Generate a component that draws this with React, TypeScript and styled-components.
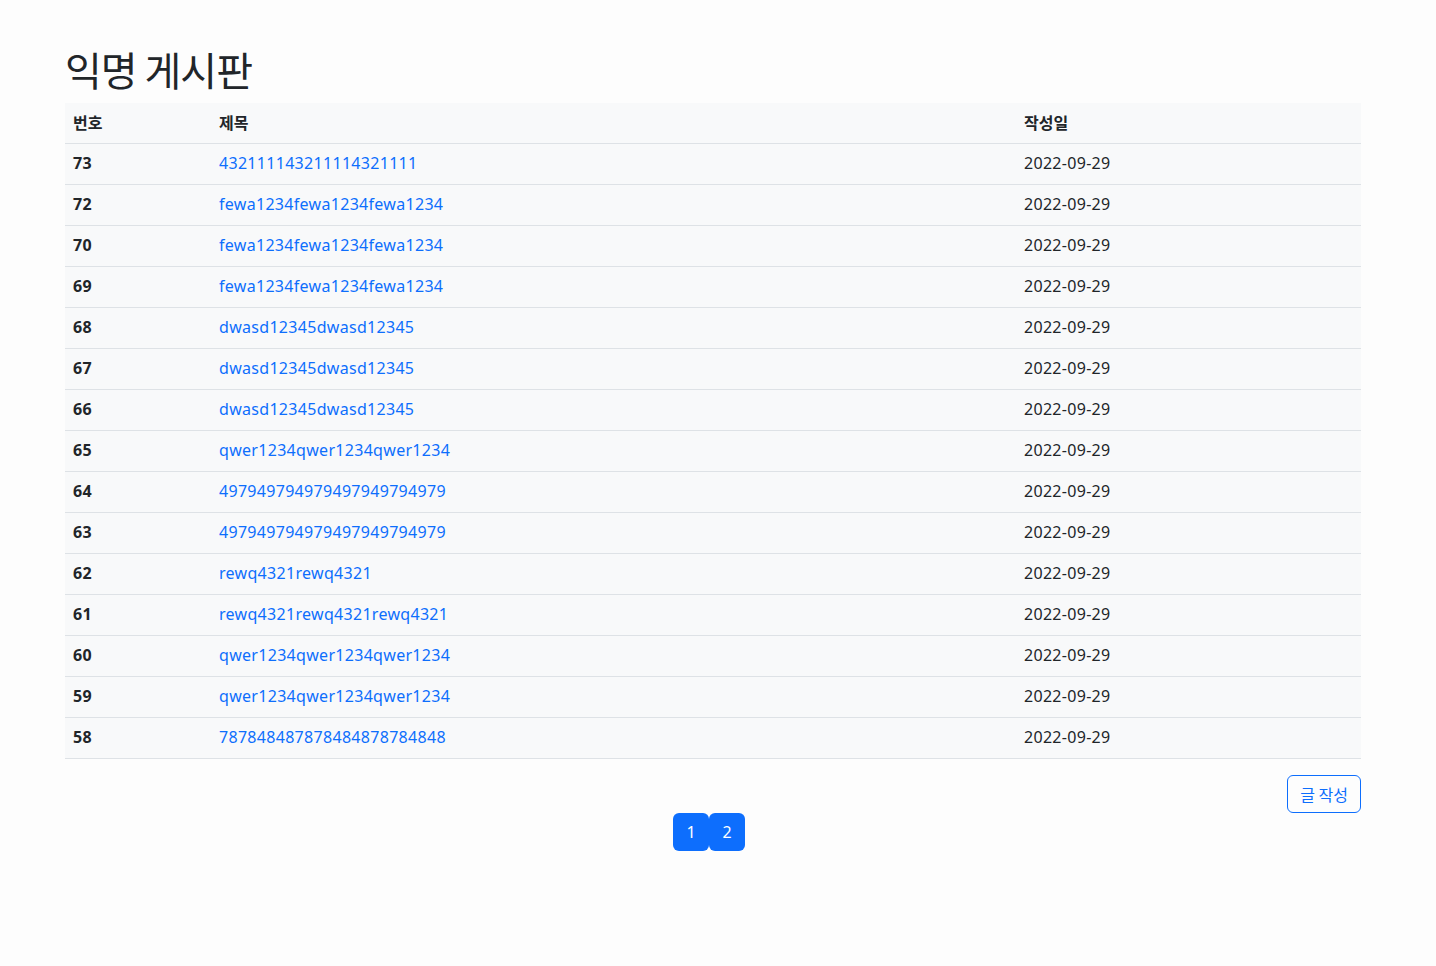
import styled, { createGlobalStyle } from 'styled-components'

const GlobalStyle = createGlobalStyle`
  body {
    margin: 0;
    padding-right: 10px;
    background: #fdfdfd;
    color: #212529;
    font-family: "Noto Sans", "Noto Sans CJK KR", sans-serif;
    font-size: 16px;
    line-height: 1.5;
  }
`

const Container = styled.div`
  width: 1296px;
  margin: 0 auto;
  padding-top: 47px;
`

const Title = styled.h1`
  margin: -2px 0 10px;
  font-size: 40px;
  font-weight: 400;
  line-height: 1.2;
  letter-spacing: -1px;
  font-family: "Noto Sans CJK KR", sans-serif;
`

const Table = styled.table`
  width: 100%;
  table-layout: fixed;
  border-collapse: collapse;
  background: #f8f9fa;
`

const HeadCell = styled.th<{ $width?: number }>`
  width: ${(p) => (p.$width ? `${p.$width}px` : 'auto')};
  padding: 7px 8px 9px;
  text-align: left;
  font-weight: 700;
  font-family: "Noto Sans CJK KR", sans-serif;
  border-bottom: 1px solid #dee2e6;
`

const Cell = styled.td<{ $bold?: boolean }>`
  padding: 7px 8px 9px;
  font-weight: ${(p) => (p.$bold ? 700 : 400)};
  letter-spacing: 0.3px;
  border-bottom: 1px solid #dee2e6;
`

const TitleLink = styled.a`
  color: #0d6efd;
  text-decoration: none;
`

const Actions = styled.div`
  display: flex;
  justify-content: flex-end;
  margin-top: 16px;
`

const OutlineButton = styled.button`
  height: 38px;
  padding: 0 12px;
  border: 1px solid #0d6efd;
  border-radius: 6px;
  background: transparent;
  color: #0d6efd;
  font-size: 16px;
  font-family: "Noto Sans CJK KR", sans-serif;
`

const Pager = styled.div`
  display: flex;
  justify-content: center;
  padding-right: 8px;
`

const PageButton = styled.button`
  width: 36px;
  height: 38px;
  border: none;
  border-radius: 6px;
  background: #0d6efd;
  color: #fff;
  font-size: 16px;
  font-family: inherit;
`

type Post = { id: number; title: string; date: string }

const posts: Post[] = [
  { id: 73, title: '432111143211114321111', date: '2022-09-29' },
  { id: 72, title: 'fewa1234fewa1234fewa1234', date: '2022-09-29' },
  { id: 70, title: 'fewa1234fewa1234fewa1234', date: '2022-09-29' },
  { id: 69, title: 'fewa1234fewa1234fewa1234', date: '2022-09-29' },
  { id: 68, title: 'dwasd12345dwasd12345', date: '2022-09-29' },
  { id: 67, title: 'dwasd12345dwasd12345', date: '2022-09-29' },
  { id: 66, title: 'dwasd12345dwasd12345', date: '2022-09-29' },
  { id: 65, title: 'qwer1234qwer1234qwer1234', date: '2022-09-29' },
  { id: 64, title: '497949794979497949794979', date: '2022-09-29' },
  { id: 63, title: '497949794979497949794979', date: '2022-09-29' },
  { id: 62, title: 'rewq4321rewq4321', date: '2022-09-29' },
  { id: 61, title: 'rewq4321rewq4321rewq4321', date: '2022-09-29' },
  { id: 60, title: 'qwer1234qwer1234qwer1234', date: '2022-09-29' },
  { id: 59, title: 'qwer1234qwer1234qwer1234', date: '2022-09-29' },
  { id: 58, title: '787848487878484878784848', date: '2022-09-29' },
]

const App = () => {
  return (
    <>
      <GlobalStyle />
      <Container>
        <Title>익명 게시판</Title>
        <Table>
          <thead>
            <tr>
              <HeadCell $width={130}>번호</HeadCell>
              <HeadCell $width={789}>제목</HeadCell>
              <HeadCell>작성일</HeadCell>
            </tr>
          </thead>
          <tbody>
            {posts.map((post) => (
              <tr key={post.id}>
                <Cell $bold>{post.id}</Cell>
                <Cell>
                  <TitleLink href="#">{post.title}</TitleLink>
                </Cell>
                <Cell>{post.date}</Cell>
              </tr>
            ))}
          </tbody>
        </Table>
        <Actions>
          <OutlineButton>글 작성</OutlineButton>
        </Actions>
        <Pager>
          <PageButton>1</PageButton>
          <PageButton>2</PageButton>
        </Pager>
      </Container>
    </>
  )
}

export default App
